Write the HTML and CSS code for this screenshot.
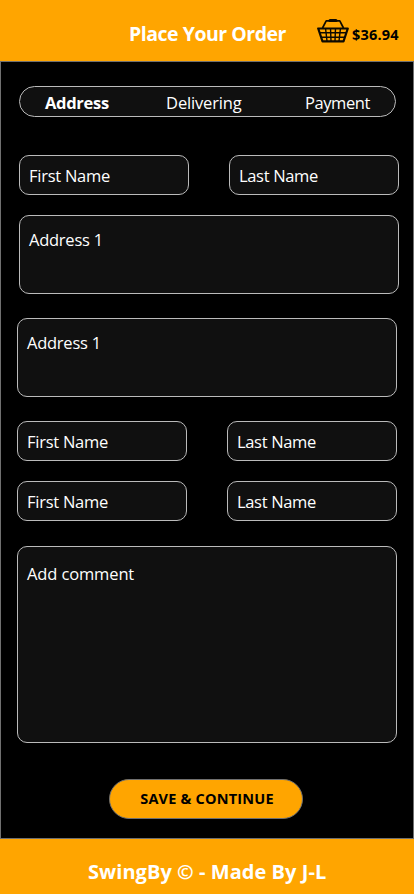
FILE: index.html
```html
<!DOCTYPE html>
<html lang="en">
<head>
<meta charset="utf-8">
<title>Place Your Order</title>
<link rel="stylesheet" href="styles.css">
</head>
<body>
<header class="header">
  <h1 class="title">Place Your Order</h1>
  <div class="cart">
    <svg class="basket" viewBox="0 0 32 26" width="32" height="26" fill="none" stroke="#0d0900" stroke-width="1.7" stroke-linejoin="round">
      <path d="M5.5 10 9.2 2.8H22.8L26.5 10"/>
      <path d="M13 2.4H19" stroke-width="3" stroke-linecap="round"/>
      <path d="M1.2 10.5H30.8L26.5 23.3H5.5Z" stroke-width="2.2"/>
      <path d="M3 14.7H29M4.5 19.3H27.5M8.5 10 10 23M13.5 10 14 23M18.5 10 18 23M23.5 10 22 23" stroke-width="1.4"/>
    </svg>
    <span class="price">$36.94</span>
  </div>
</header>
<main class="main">
  <nav class="tabs"><span class="tab active">Address</span><span class="tab delivering">Delivering</span><span class="tab payment">Payment</span></nav>
  <form class="form">
    <div class="row contact"><div class="field"><span class="first">First Name</span></div><div class="field"><span class="last">Last Name</span></div></div>
    <div class="field area primary"><span class="addr">Address 1</span></div>
    <div class="field area"><span class="addr">Address 1</span></div>
    <div class="row"><div class="field"><span class="first">First Name</span></div><div class="field"><span class="last">Last Name</span></div></div>
    <div class="row second"><div class="field"><span class="first">First Name</span></div><div class="field"><span class="last">Last Name</span></div></div>
    <div class="field comment"><span class="note">Add comment</span></div>
    <button class="save" type="button"><span>SAVE &amp; CONTINUE</span></button>
  </form>
</main>
<footer class="footer"><span>SwingBy © - Made By J-L</span></footer>
</body>
</html>
```
FILE: styles.css
```css
* { box-sizing: border-box; }
body {
  margin: 0;
  width: 414px;
  height: 894px;
  overflow: hidden;
  background: #ffa500;
  color: #fff;
  font: 16.5px/24px "Segoe UI", "Open Sans", sans-serif;
  white-space: nowrap;
}
.header {
  height: 61px;
  display: flex;
  padding-left: 129px;
}
.title {
  margin: 22px 0 0;
  width: 188px;
  font-size: 19.5px;
  line-height: 24px;
  font-weight: 700;
  letter-spacing: -0.48px;
}
.cart { display: flex; padding-top: 18px; }
.basket { flex: none; }
.price {
  margin: 5px 0 0 3px;
  color: #000;
  font-size: 14.5px;
  font-weight: 700;
  letter-spacing: 0.2px;
}
.main {
  height: 778px;
  border: 1px solid #707070;
  background: #000;
  padding: 24px 16px 0;
}
.tabs {
  display: flex;
  width: 377px;
  height: 31px;
  margin-left: 2px;
  padding: 4px 25px;
  justify-content: space-between;
  border: 1px solid #bbb;
  border-radius: 16px;
  background: #101010;
}
.active { font-weight: 700; letter-spacing: -0.3px; }
.delivering { letter-spacing: -0.15px; margin-right: 3px; margin-left: -3px; }
.payment { letter-spacing: -0.4px; }
.form { display: flex; flex-direction: column; margin-top: 38px; }
.row { display: flex; gap: 40px; margin-top: 24px; }
.field {
  width: 170px;
  height: 40px;
  flex: none;
  padding: 8px 9px;
  border: 1px solid #bbb;
  border-radius: 10px;
  background: #101010;
}
.first { letter-spacing: -0.26px; }
.last { letter-spacing: -0.33px; }
.addr { letter-spacing: -0.25px; }
.note { letter-spacing: -0.13px; }
.contact { margin: 0 0 0 2px; }
.second { margin-top: 20px; }
.area { width: 380px; height: 79px; padding-top: 12px; margin-top: 24px; }
.primary { margin: 20px 0 0 2px; }
.comment { width: 380px; height: 197px; margin-top: 25px; padding-top: 15px; }
.save {
  width: 194px;
  height: 40px;
  margin: 36px 0 0 92px;
  padding: 0 0 0 2px;
  border: 1px solid #707070;
  border-radius: 20px;
  background: #ffa500;
  color: #000;
  font: 700 14.5px/24px "Segoe UI", "Open Sans", sans-serif;
  letter-spacing: 0.2px;
}
.footer {
  padding: 21px 0 0 88px;
  font-size: 20px;
  font-weight: 700;
  letter-spacing: 0.05px;
}
```
